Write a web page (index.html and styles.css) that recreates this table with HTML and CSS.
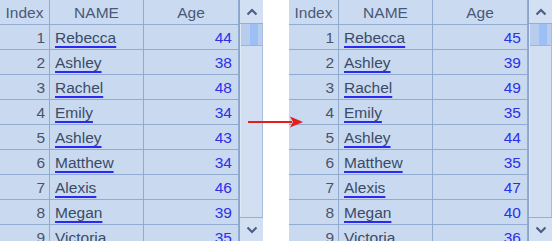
FILE: index.html
```html
<!DOCTYPE html>
<html>
<head>
<meta charset="utf-8">
<link rel="stylesheet" href="styles.css">
</head>
<body>
<div class="stage">
  <div class="panel">
    <div class="table">
      <div class="cell head">Index</div><div class="cell head">NAME</div><div class="cell head">Age</div>
      <div class="cell idx">1</div><div class="cell name"><span>Rebecca</span></div><div class="cell age">44</div>
      <div class="cell idx">2</div><div class="cell name"><span>Ashley</span></div><div class="cell age">38</div>
      <div class="cell idx">3</div><div class="cell name"><span>Rachel</span></div><div class="cell age">48</div>
      <div class="cell idx">4</div><div class="cell name"><span>Emily</span></div><div class="cell age">34</div>
      <div class="cell idx">5</div><div class="cell name"><span>Ashley</span></div><div class="cell age">43</div>
      <div class="cell idx">6</div><div class="cell name"><span>Matthew</span></div><div class="cell age">34</div>
      <div class="cell idx">7</div><div class="cell name"><span>Alexis</span></div><div class="cell age">46</div>
      <div class="cell idx">8</div><div class="cell name"><span>Megan</span></div><div class="cell age">39</div>
      <div class="cell idx">9</div><div class="cell name"><span>Victoria</span></div><div class="cell age">35</div>
    </div>
    <div class="scrollbar">
      <div class="btn"><svg width="12" height="8" viewBox="0 0 12 8"><path d="M1.5 6.5 L6 2 L10.5 6.5" fill="none" stroke="#4d5f80" stroke-width="2.2"/></svg></div>
      <div class="track"><div class="thumb"></div></div>
      <div class="btn down"><svg width="12" height="8" viewBox="0 0 12 8"><path d="M1.5 1.5 L6 6 L10.5 1.5" fill="none" stroke="#4d5f80" stroke-width="2.2"/></svg></div>
    </div>
  </div>
  <div class="panel">
    <div class="table">
      <div class="cell head">Index</div><div class="cell head">NAME</div><div class="cell head">Age</div>
      <div class="cell idx">1</div><div class="cell name"><span>Rebecca</span></div><div class="cell age">45</div>
      <div class="cell idx">2</div><div class="cell name"><span>Ashley</span></div><div class="cell age">39</div>
      <div class="cell idx">3</div><div class="cell name"><span>Rachel</span></div><div class="cell age">49</div>
      <div class="cell idx">4</div><div class="cell name"><span>Emily</span></div><div class="cell age">35</div>
      <div class="cell idx">5</div><div class="cell name"><span>Ashley</span></div><div class="cell age">44</div>
      <div class="cell idx">6</div><div class="cell name"><span>Matthew</span></div><div class="cell age">35</div>
      <div class="cell idx">7</div><div class="cell name"><span>Alexis</span></div><div class="cell age">47</div>
      <div class="cell idx">8</div><div class="cell name"><span>Megan</span></div><div class="cell age">40</div>
      <div class="cell idx">9</div><div class="cell name"><span>Victoria</span></div><div class="cell age">36</div>
    </div>
    <div class="scrollbar">
      <div class="btn"><svg width="12" height="8" viewBox="0 0 12 8"><path d="M1.5 6.5 L6 2 L10.5 6.5" fill="none" stroke="#4d5f80" stroke-width="2.2"/></svg></div>
      <div class="track"><div class="thumb"></div></div>
      <div class="btn down"><svg width="12" height="8" viewBox="0 0 12 8"><path d="M1.5 1.5 L6 6 L10.5 1.5" fill="none" stroke="#4d5f80" stroke-width="2.2"/></svg></div>
    </div>
  </div>
  <svg class="arrow" width="56" height="14" viewBox="0 0 56 14"><line x1="0" y1="7" x2="44" y2="7" stroke="#e81c1c" stroke-width="2"/><path d="M42 1.5 L55 7 L42 12.5 L45 7 Z" fill="#e81c1c"/></svg>
</div>
</body>
</html>
```
FILE: styles.css
```css
html, body {
  margin: 0;
  padding: 0;
  background: #ffffff;
}
.stage {
  position: relative;
  display: flex;
  gap: 26px;
  width: 553px;
  height: 241px;
  overflow: hidden;
  font-family: "Liberation Sans", Arial, sans-serif;
  font-size: 15.5px;
}
.panel {
  display: flex;
  width: 263px;
  height: 241px;
  overflow: hidden;
  background: #c9daf0;
}
.table {
  display: grid;
  grid-template-columns: 50px 94px 95px;
  grid-auto-rows: 25px;
  width: 239px;
  align-content: start;
}
.cell {
  box-sizing: border-box;
  border-right: 1px solid #90aad0;
  border-bottom: 1px solid #90aad0;
  display: flex;
  align-items: center;
  white-space: nowrap;
  line-height: 1;
  padding-top: 1px;
}
.head {
  justify-content: center;
  color: #4a5878;
  background: #cadbf1;
}
.idx {
  justify-content: flex-end;
  padding-right: 4px;
  color: #4a5468;
}
.name {
  padding-left: 5px;
  color: #3b4a68;
}
.name span {
  text-decoration: underline;
  text-decoration-color: #2a2af0;
  text-underline-offset: 3px;
  text-decoration-thickness: 1.5px;
}
.age {
  justify-content: flex-end;
  padding-right: 6px;
  color: #2f2fe8;
}
.scrollbar {
  box-sizing: border-box;
  width: 24px;
  height: 241px;
  border-left: 1px solid #8aa4cc;
  display: flex;
  flex-direction: column;
  background: #d2dff2;
}
.btn {
  box-sizing: border-box;
  height: 24px;
  border-bottom: 1px solid #97afd2;
  background: #d3e0f3;
  display: flex;
  align-items: center;
  justify-content: center;
}
.btn.down {
  border-bottom: none;
  border-top: 1px solid #97afd2;
}
.track {
  flex: 1;
  box-sizing: border-box;
  border-right: 1px solid #a8bcdc;
  border-left: 1px solid #e0e9f6;
}
.thumb {
  height: 21px;
  background: linear-gradient(to right, #b8cdee 0, #b8cdee 45%, #9cc0f6 45%, #9cc0f6 80%, #b8cdee 80%);
  border-bottom: 1px solid #9db4d8;
}
.arrow {
  position: absolute;
  left: 248px;
  top: 115px;
}
```
